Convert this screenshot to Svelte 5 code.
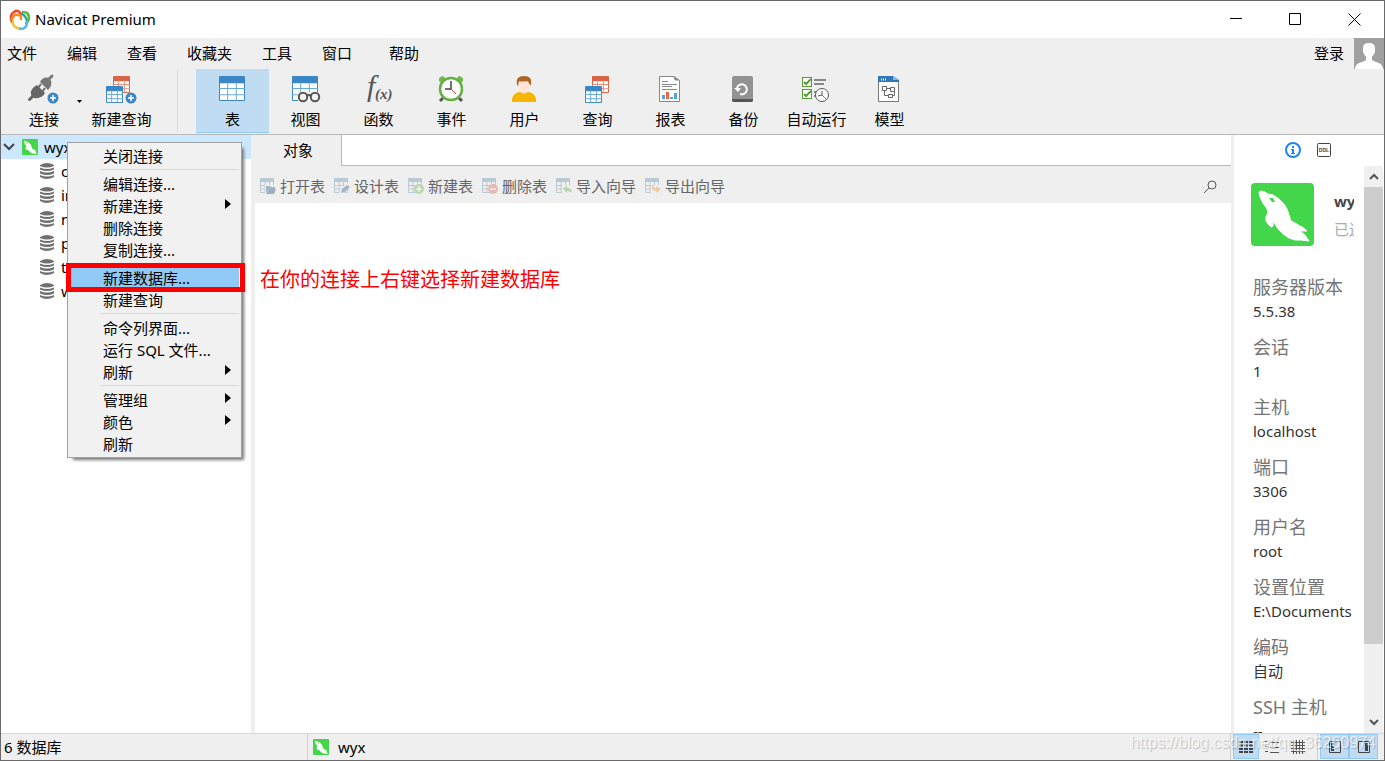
<script>
	const menus = ['文件', '编辑', '查看', '收藏夹', '工具', '窗口'];

	const tools = [
		{ icon: 'table', label: '表' },
		{ icon: 'view', label: '视图' },
		{ icon: 'function', label: '函数' },
		{ icon: 'event', label: '事件' },
		{ icon: 'user', label: '用户' },
		{ icon: 'query', label: '查询' },
		{ icon: 'report', label: '报表' },
		{ icon: 'backup', label: '备份' },
		{ icon: 'auto', label: '自动运行' },
		{ icon: 'model', label: '模型' }
	];

	const databases = ['c', 'in', 'm', 'p', 't', 'w'];

	const objectActions = [
		{ icon: 'open', label: '打开表' },
		{ icon: 'design', label: '设计表' },
		{ icon: 'add', label: '新建表' },
		{ icon: 'remove', label: '删除表' },
		{ icon: 'import', label: '导入向导' },
		{ icon: 'export', label: '导出向导' }
	];

	// groups are divided by a separator line
	const contextGroups = [
		[{ label: '关闭连接' }],
		[
			{ label: '编辑连接...' },
			{ label: '新建连接', submenu: true },
			{ label: '删除连接' },
			{ label: '复制连接...' }
		],
		[{ label: '新建数据库...', marked: true }, { label: '新建查询' }],
		[{ label: '命令列界面...' }, { label: '运行 SQL 文件...' }, { label: '刷新', submenu: true }],
		[{ label: '管理组', submenu: true }, { label: '颜色', submenu: true }, { label: '刷新' }]
	];

	const info = [
		{ label: '服务器版本', value: '5.5.38' },
		{ label: '会话', value: '1' },
		{ label: '主机', value: 'localhost' },
		{ label: '端口', value: '3306' },
		{ label: '用户名', value: 'root' },
		{ label: '设置位置', value: 'E:\\Documents' },
		{ label: '编码', value: '自动' },
		{ label: 'SSH 主机', value: '--' }
	];

	let activeTool = $state('table');
</script>

{#snippet dolphin(size)}
	<svg width={size} height={size} viewBox="0 0 63 63" aria-hidden="true">
		<rect width="63" height="63" rx="4" fill="#43d64b" />
		<path
			d="M8 9L10 8L14 9L17 11L22 12L28 16L33 21L36 26L38 32L40 38L44 40L49 43L53 45L56 48L49 48L54 52L58 58L50 57L44 57L38 55L32 51L27 46L24 41L22 38L22 43L20 44L17 41L15 38L15 34L17 29L16 26L12 20L9 14Z"
			fill="#fff"
			stroke="#fff"
			stroke-linejoin="round"
		/>
		<path d="M18 15l4 0l2 4l-3 0z" fill="#43d64b" />
	</svg>
{/snippet}

{#snippet grid(x, y, w, h, color, line)}
	<rect {x} {y} width={w} height={h} rx="1" fill={color} />
	<rect x={x + 1} y={y + h / 4 + 1} width={w - 2} height={(h * 3) / 4 - 2} fill="#fff" />
	<path
		d="M{x + w / 3} {y + h / 4}v{(h * 3) / 4}M{x + (w * 2) / 3} {y + h / 4}v{(h * 3) / 4}M{x} {y + h / 2}h{w}M{x} {y + (h * 3) / 4}h{w}"
		stroke={line}
		fill="none"
	/>
{/snippet}

{#snippet plus(x, y)}
	<circle cx={x} cy={y} r="5.5" fill="#3b86c4" />
	<path d="M{x - 3} {y}h6M{x} {y - 3}v6" stroke="#fff" stroke-width="1.5" />
{/snippet}

{#snippet toolIcon(name)}
	<svg width="34" height="32" viewBox="1 0 34 32" aria-hidden="true">
		{#if name === 'connect'}
			<g transform="translate(1 2)">
				<path d="M2.500 24.500L7 20" stroke="#666" stroke-width="3" stroke-linecap="round" />
				<path d="M5 22Q2 16 7 12L10 10L18 18Q15 24 7 23Z" fill="#666" />
				<path d="M11 13l3-4M15 17l3-4" stroke="#666" stroke-width="2" />
				<path d="M13 7Q16 1 22 3Q27 8 22 14L21 15Z" fill="#777" />
				<path d="M21 5l4-4" stroke="#777" stroke-width="3" stroke-linecap="round" />
			</g>
			{@render plus(27, 25)}
		{:else if name === 'newquery'}
			{@render grid(9, 3, 17, 17, '#d96445', '#e48f78')}
			{@render grid(2, 13, 17, 17, '#3b86c4', '#6aa9dc')}
			{@render plus(27, 25)}
		{:else if name === 'table'}
			{@render grid(4, 3, 26, 25, '#3b86c4', '#6aa9dc')}
		{:else if name === 'view'}
			{@render grid(4, 3, 26, 25, '#3b86c4', '#6aa9dc')}
			<path d="M10 19h23v12H10z" fill="#efefef" />
			<circle cx="15" cy="24" r="4.2" fill="#f3f3f3" stroke="#555" stroke-width="2" />
			<circle cx="27" cy="24" r="4.2" fill="#f3f3f3" stroke="#555" stroke-width="2" />
			<path d="M18.500 23q2.500-2 5 0" fill="none" stroke="#555" stroke-width="2" />
		{:else if name === 'function'}
			<text x="6" y="23" class="fn-f">f</text>
			<text x="14" y="26" class="fn-x">(x)</text>
		{:else if name === 'event'}
			<path d="M5 8Q4 4 9 3L12 6L7 10ZM29 8Q30 4 25 3L22 6L27 10Z" fill="#6ebb45" />
			<path d="M9 25l-3 3M25 25l3 3" stroke="#555" stroke-width="3" />
			<circle cx="17" cy="16" r="11" fill="#fff" stroke="#65af42" stroke-width="2.5" />
			<path d="M17 8v8h-6" fill="none" stroke="#444" stroke-width="1.5" />
			<path d="M17 16l5 5" stroke="#e54c40" />
		{:else if name === 'user'}
			<path d="M5 29v-3q1-6 8-7l4 1 4-1q7 1 8 7v3z" fill="#f7b500" />
			<path d="M14 15h6v4q-3 3-6 0z" fill="#fbe0cf" />
			<ellipse cx="17" cy="12" rx="6" ry="8" fill="#fde4d4" />
			<path d="M10 12Q8 3 17 3Q26 3 24 12L23 12Q22 9 20 8Q15 9 12 8L11 13Z" fill="#ad6526" />
		{:else if name === 'query'}
			{@render grid(12, 3, 17, 17, '#d96445', '#e48f78')}
			{@render grid(5, 13, 17, 17, '#3b86c4', '#6aa9dc')}
		{:else if name === 'report'}
			<path d="M6.500 3.500h15l5 4v21h-20z" fill="#fff" stroke="#888" />
			<path d="M20 3.500l2 4h5z" fill="#888" />
			<path d="M9 8.500h6M9 11.500h15M9 13.500h10M9 16.500h15" stroke="#888" />
			<path d="M9 22h3v4H9zM17 24h3v2h-3zM21 20h3v6h-3z" fill="#53a4dc" />
			<path d="M13 19h3v7h-3z" fill="#ee6542" />
		{:else if name === 'backup'}
			<rect x="6" y="3" width="21" height="26" rx="2" fill="#929292" />
			<path d="M6 26h21v1q0 2-2 2H8q-2 0-2-2z" fill="#555" />
			<path d="M11 15a5 5 0 1 1 3 6" fill="none" stroke="#fff" stroke-width="2" />
			<path d="M8 15h7l-3 4z" fill="#fff" />
		{:else if name === 'auto'}
			<rect x="3.500" y="4.500" width="9" height="9" fill="#fff" stroke="#579c38" />
			<rect x="3.500" y="16.500" width="9" height="9" fill="#fff" stroke="#579c38" />
			<path d="M5 9l2 2 5-5M5 21l2 2 5-5" fill="none" stroke="#579c38" stroke-width="2" />
			<path d="M15 7h12M15 11h10M15 19h3M15 23h3" stroke="#888" stroke-width="2" />
			<circle cx="23" cy="22" r="6.500" fill="#fff" stroke="#555" />
			<path d="M23 18v4l-4 1" fill="none" stroke="#555" />
			<path d="M23 22l4 4" stroke="#e54c40" />
		{:else if name === 'model'}
			<path d="M6.500 3.500h14l6 5v20h-20z" fill="#fff" stroke="#777" />
			<path d="M6 3h15l6 4v2H6z" fill="#2f77b5" />
			<path d="M21 3v4h6z" fill="#7bbcf0" />
			<path d="M9 6.500h6" stroke="#fff" stroke-dasharray="1 1" stroke-width="2" />
			<path d="M10.500 13.500h4v4h-4zM18.500 14.500h4v4h-4zM16.500 21.500h4v3h-4zM14.500 15.500h4M12.500 17.500v5h4M22.500 18.500v4h-2" fill="none" stroke="#666" />
		{/if}
	</svg>
{/snippet}

{#snippet actionIcon(name)}
	<svg width="16" height="16" viewBox="0 0 16 16" aria-hidden="true">
		<path d="M0 0h14v4H0z" fill="#b9cad7" />
		<path d="M.5 4v10.500h13V4M5 4v10M9.500 4v10M.5 7.500h13M.5 11h13" fill="none" stroke="#bccbd6" />
		{#if name === 'open'}
			<path d="M5 7h11v9H5z" fill="#efefef" />
			<path d="M6 15V8h4l1 1h4v2H9z" fill="#a4b4c2" />
			<path d="M9 11h7l-2 5H6z" fill="#9cadbd" />
		{:else if name === 'design'}
			<path d="M5 16l2-6 6-5 4 3-8 8z" fill="#efefef" />
			<path d="M7 15l1-4 5-4 3 2-5 5z" fill="#9eb5c7" />
		{:else if name === 'add'}
			<circle cx="11" cy="11" r="5" fill="#b9d6ad" />
			<path d="M8 11h6M11 8v6" stroke="#fff" />
		{:else if name === 'remove'}
			<circle cx="11" cy="11" r="5" fill="#e6b9b5" />
			<path d="M8 11h6" stroke="#fff" />
		{:else if name === 'import'}
			<path d="M6 7h10v9H6z" fill="#efefef" />
			<path d="M7 11l4-4v3q5 0 5 5-2-2-5-2v2z" fill="#b8d3ae" />
		{:else}
			<path d="M6 7h10v9H6z" fill="#efefef" />
			<path d="M7 7v3q0 3 4 3v2l5-4-5-3v2H9V7z" fill="#edcda8" />
		{/if}
	</svg>
{/snippet}

<div class="window">
	<header class="title-bar">
		<svg class="app-logo" width="22" height="22" viewBox="0 0 22 22" aria-hidden="true">
			<g fill="none" stroke-width="2.5" stroke-linecap="round">
				<path d="M3 13Q0 6 5 3Q9 0 12 5" stroke="#ee4b2b" />
				<path d="M3 10Q5 5 9 6Q13 6 12 10" stroke="#f28b25" />
				<path d="M14 3Q20 3 20 9Q20 12 17 14" stroke="#58b947" />
				<path d="M13 5Q17 7 18 12" stroke="#2fa69b" />
				<path d="M8 19Q18 22 18 13" stroke="#5ab4e5" />
				<path d="M4 12Q3 18 9 19" stroke="#f2c33b" />
			</g>
		</svg>
		<span class="app-title">Navicat Premium</span>
		<button class="window-button" aria-label="最小化">
			<svg width="13" height="13"><path d="M0 5.500h12" stroke="#000" /></svg>
		</button>
		<button class="window-button" aria-label="最大化">
			<svg width="13" height="13"><path d="M.5.5h11v11H.5z" fill="none" stroke="#000" /></svg>
		</button>
		<button class="window-button" aria-label="关闭">
			<svg width="13" height="13"><path d="M.5.5l12 12M12.500.5l-12 12" stroke="#000" /></svg>
		</button>
	</header>

	<nav class="menu-bar">
		<div class="menu-group">
			{#each menus as menu}
				<button>{menu}</button>
			{/each}
		</div>
		<button>帮助</button>
		<div class="account">
			<button>登录</button>
			<svg width="30" height="31" viewBox="0 0 30 31" aria-hidden="true">
				<path d="M0 0h30v31H0z" fill="#a0a0a0" />
				<path d="M9 10q0-5 6-5t6 5v4l-1 2-2 3v3q3 2 7 3 4 2 4 6H1q0-4 4-6 4-1 7-3v-3l-2-3-1-2z" fill="#fff" />
			</svg>
		</div>
	</nav>

	<div class="toolbar">
		<button class="tool connect">
			{@render toolIcon('connect')}
			<span>连接</span>
		</button>
		<button class="tool-caret" aria-label="更多连接">
			<svg width="5" height="3"><path d="M0 0h5L2.500 3z" fill="#000" /></svg>
		</button>
		<button class="tool">
			{@render toolIcon('newquery')}
			<span>新建查询</span>
		</button>
		<div class="tool-divider"></div>
		{#each tools as tool}
			<button
				class="tool"
				class:active={activeTool === tool.icon}
				onclick={() => (activeTool = tool.icon)}
			>
				{@render toolIcon(tool.icon)}
				<span>{tool.label}</span>
			</button>
		{/each}
	</div>

	<div class="workspace">
		<aside class="sidebar">
			<div class="tree-row connection">
				<svg width="12" height="8"><path d="M1 1l5 5 5-5" fill="none" stroke="#444" stroke-width="2" /></svg>
				{@render dolphin(16)}
				<span>wyx</span>
			</div>
			{#each databases as database}
				<div class="tree-row database">
					<svg width="16" height="16" viewBox="0 0 16 16" aria-hidden="true">
						<path d="M1 2q7-4 14 0v1q-7 3-14 0zM1 4.500q7 3 14 0v2q-7 3-14 0zM1 8q7 3 14 0v2.500q-7 3-14 0zM1 12q7 3 14 0v2q-7 4-14 0z" fill="#707070" />
					</svg>
					<span>{database}</span>
				</div>
			{/each}

			<div class="context-menu" role="menu">
				{#each contextGroups as group}
					<div class="context-group">
						{#each group as item}
							<button class="context-item" class:marked={item.marked} role="menuitem">
								{item.label}
								{#if item.submenu}
									<svg width="6" height="14"><path d="M0 0l6 5-6 5z" fill="#000" /></svg>
								{/if}
							</button>
						{/each}
					</div>
				{/each}
			</div>
		</aside>

		<main class="content">
			<div class="tabs">
				<button class="tab">对象</button>
			</div>
			<div class="object-bar">
				{#each objectActions as action}
					<button class="object-action">
						{@render actionIcon(action.icon)}
						<span>{action.label}</span>
					</button>
				{/each}
				<button class="search" aria-label="搜索">
					<svg width="13" height="13" fill="none" stroke="#555"><circle cx="8" cy="5" r="4" /><path d="M5 8l-5 5" /></svg>
				</button>
			</div>
			<div class="objects">
				<p class="note">在你的连接上右键选择新建数据库</p>
			</div>
		</main>

		<aside class="info-panel">
			<div class="info-tabs">
				<button aria-label="信息">
					<svg width="16" height="16" viewBox="0 0 16 16">
						<circle cx="8" cy="8" r="7" fill="none" stroke="#1a85ff" stroke-width="2" />
						<path d="M7 4h2v2H7zM6 7h3v4h1v1H6v-1h1V8H6z" fill="#1a85ff" />
					</svg>
				</button>
				<button class="ddl" aria-label="DDL">
					<svg width="14" height="14" viewBox="0 0 14 14">
						<rect x=".5" y=".5" width="13" height="13" rx="1" fill="none" stroke="#444" />
						<text x="7" y="9" text-anchor="middle">DDL</text>
					</svg>
				</button>
			</div>
			<div class="info-body">
				<div class="info-content">
					<div class="info-head">
						{@render dolphin(63)}
						<div>
							<strong>wyx</strong>
							<span>已连接</span>
						</div>
					</div>
					<dl>
						{#each info as row}
							<dt>{row.label}</dt>
							<dd>{row.value}</dd>
						{/each}
					</dl>
				</div>
				<div class="scrollbar">
					<button aria-label="向上滚动">
						<svg width="10" height="7"><path d="M1 6l4-4 4 4" fill="none" stroke="#555" stroke-width="2" /></svg>
					</button>
					<div class="track"><div class="thumb"></div></div>
					<button aria-label="向下滚动">
						<svg width="10" height="7"><path d="M1 1l4 4 4-4" fill="none" stroke="#555" stroke-width="2" /></svg>
					</button>
				</div>
			</div>
		</aside>
	</div>

	<footer class="status-bar">
		<div class="status-count">6 数据库</div>
		<div class="status-connection">
			{@render dolphin(16)}
			<span>wyx</span>
		</div>
		<div class="view-modes">
			<button class="on" aria-label="列表">
				<svg width="14" height="12"><path d="M0 1h14M0 4.500h14M0 8h14M0 11h14" stroke="#444" stroke-width="2" stroke-dasharray="4 1" /></svg>
			</button>
			<button aria-label="详细信息">
				<svg width="14" height="12"><path d="M0 .5h3M0 5.500h3M0 10.500h3M5 1.500h9M5 6.500h9M5 11.500h9" stroke="#555" /></svg>
			</button>
			<button aria-label="ER 图表">
				<svg width="14" height="14"><path d="M0 2.500h14M0 5.500h14M0 8.500h14M0 11.500h14M2.500 0v14M5.500 0v14M8.500 0v14M11.500 0v14" stroke="#555" /></svg>
			</button>
		</div>
		<div class="pane-modes">
			<button class="on" aria-label="导航窗格">
				<svg width="12" height="12"><path d="M.5.5h11v11H.5z" fill="none" stroke="#444" /><path d="M2 2h3v8H2z" fill="#444" /><path d="M3 4.500h2M3 7.500h2" stroke="#c0dcf3" /></svg>
			</button>
			<button class="on" aria-label="信息窗格">
				<svg width="12" height="12"><path d="M.5.5h11v11H.5z" fill="none" stroke="#444" /><path d="M7 2h3v8H7z" fill="#444" /></svg>
			</button>
		</div>
	</footer>
	<div class="watermark">https://blog.csdn.net/qq_36260974</div>
</div>

<style>
	:global(body) {
		margin: 0;
	}

	.window {
		position: relative;
		box-sizing: border-box;
		display: flex;
		flex-direction: column;
		height: 100vh;
		border: 1px solid #6b6969;
		background: #efefef;
		color: #000;
		font: 15px/22px 'Noto Sans', 'Noto Sans CJK SC', sans-serif;
		overflow: hidden;
	}

	svg {
		display: block;
		flex: none;
	}

	button {
		padding: 0;
		border: 0;
		background: none;
		color: inherit;
		font: inherit;
		white-space: nowrap;
	}

	.title-bar {
		display: flex;
		align-items: center;
		height: 37px;
		padding-left: 8px;
		background: #fff;
	}

	.app-title {
		flex: 1;
		margin-left: 4px;
		padding-bottom: 2px;
	}

	.window-button {
		display: flex;
		align-items: center;
		justify-content: center;
		width: 59px;
		height: 37px;
	}

	.menu-bar {
		display: flex;
		gap: 37px;
		height: 31px;
		padding-left: 6px;
	}

	.menu-bar button {
		height: 30px;
	}

	.menu-group {
		display: flex;
		gap: 30px;
	}

	.account {
		display: flex;
		gap: 10px;
		margin-left: auto;
	}

	.toolbar {
		display: flex;
		height: 65px;
		border-bottom: 1px solid #b8b8b8;
	}

	.tool {
		box-sizing: border-box;
		display: flex;
		flex-direction: column;
		align-items: center;
		width: 73px;
		height: 64px;
		padding-top: 4px;
		border-bottom: 1px solid transparent;
	}

	.tool span {
		margin-top: 3px;
	}

	.tool.connect {
		width: 60px;
		margin-left: 13px;
	}

	.tool.active {
		border-color: #91c9f7;
		background: #c0dcf3;
	}

	.tool-caret {
		display: flex;
		align-items: center;
		justify-content: center;
		width: 11px;
	}

	.tool-divider {
		width: 1px;
		margin: 1px 18px 2px 19px;
		background: #d9d9d9;
	}

	.fn-f {
		font: italic 30px 'Liberation Serif', serif;
		fill: #555;
	}

	.fn-x {
		font: italic bold 15px 'Liberation Serif', serif;
		fill: #555;
	}

	.workspace {
		display: flex;
		flex: 1;
		min-height: 0;
	}

	.sidebar {
		position: relative;
		flex: none;
		width: 250px;
		background: #fff;
	}

	.tree-row {
		display: flex;
		align-items: center;
		height: 24px;
	}

	.connection {
		gap: 6px;
		padding-left: 2px;
		background: #cce8ff;
	}

	.connection svg:first-child {
		margin-right: 1px;
	}

	.database {
		gap: 6px;
		padding-left: 38px;
	}

	.context-menu {
		position: absolute;
		top: 7px;
		left: 66px;
		z-index: 2;
		box-sizing: border-box;
		width: 175px;
		padding: 2px;
		border: 1px solid #a0a0a0;
		background: #f1f1f1;
		box-shadow: 4px 4px 3px -2px #777;
	}

	.context-group + .context-group::before {
		content: '';
		display: block;
		height: 1px;
		margin: 2px 0 3px 31px;
		background: #d7d7d7;
	}

	.context-item {
		position: relative;
		display: flex;
		align-items: center;
		justify-content: space-between;
		width: 100%;
		height: 22px;
		padding: 0 8px 0 33px;
	}

	.context-item.marked {
		background: #91c9f7;
	}

	.context-item.marked::after {
		content: '';
		position: absolute;
		inset: -4px -6px -3px -4px;
		border: 5px solid #f00;
	}

	.content {
		display: flex;
		flex: 1;
		flex-direction: column;
		min-width: 0;
	}

	.tabs {
		display: flex;
		height: 31px;
		background: #fff;
	}

	.tabs::after {
		content: '';
		flex: 1;
		border-bottom: 1px solid #b8b8b8;
	}

	.tab {
		width: 91px;
		padding: 0 0 2px 4px;
		border-right: 1px solid #b8b8b8;
		background: #efefef;
	}

	.object-bar {
		display: flex;
		align-items: center;
		gap: 9px;
		height: 37px;
		padding: 3px 14px 0 9px;
		box-sizing: border-box;
	}

	.object-action {
		display: flex;
		align-items: center;
		gap: 4px;
		color: #666;
	}

	.search {
		margin-left: auto;
	}

	.objects {
		flex: 1;
		margin-left: 4px;
		padding: 63px 5px 0;
		background: #fff;
	}

	.note {
		margin: 0;
		color: #f00;
		font-size: 20px;
		line-height: 28px;
	}

	.info-panel {
		display: flex;
		flex: none;
		flex-direction: column;
		width: 150px;
		margin-left: 3px;
		background: #fff;
	}

	.info-tabs {
		display: flex;
		align-items: center;
		gap: 16px;
		height: 30px;
		padding: 0 0 1px 51px;
	}

	.ddl text {
		font: bold 5px 'Liberation Sans', sans-serif;
		fill: #444;
	}

	.info-body {
		display: flex;
		flex: 1;
		min-height: 0;
	}

	.info-content {
		flex: 1;
		min-width: 0;
		margin-right: 10px;
		padding: 17px 0 0 17px;
		overflow: hidden;
	}

	.info-head {
		display: flex;
		gap: 20px;
	}

	.info-head strong,
	.info-head span {
		display: block;
		color: #444;
		line-height: 28px;
		white-space: nowrap;
	}

	.info-head div {
		padding-top: 4px;
	}

	.info-head span {
		color: #aaa;
	}

	dl {
		margin: 27px 0 0 2px;
	}

	dt {
		color: #757575;
		font-size: 18px;
		line-height: 28px;
	}

	dd {
		margin: 0 0 12px;
		color: #333;
		line-height: 20px;
	}

	.scrollbar {
		display: flex;
		flex-direction: column;
		width: 19px;
		margin-right: 1px;
		background: #f0f0f0;
	}

	.scrollbar button {
		display: flex;
		align-items: center;
		justify-content: center;
		height: 21px;
	}

	.track {
		flex: 1;
	}

	.thumb {
		height: 87%;
		background: #cdcdcd;
	}

	.status-bar {
		display: flex;
		box-sizing: border-box;
		height: 27px;
		border-top: 1px solid #d7d7d7;
		line-height: 26px;
	}

	.status-count {
		width: 303px;
		padding-left: 3px;
		border-right: 1px solid #d0d0d0;
	}

	.status-connection {
		display: flex;
		flex: 1;
		align-items: center;
		gap: 9px;
		padding-left: 5px;
	}

	.view-modes,
	.pane-modes {
		display: flex;
		padding: 0 2px;
		border-left: 1px solid #d0d0d0;
	}

	.pane-modes {
		padding-right: 6px;
	}

	.view-modes button,
	.pane-modes button {
		box-sizing: border-box;
		display: flex;
		align-items: center;
		justify-content: center;
		width: 26px;
		height: 25px;
		border: 1px solid transparent;
	}

	.pane-modes button {
		width: 29px;
	}

	.view-modes .on,
	.pane-modes .on {
		border-color: #91c9f7;
		background: #c0dcf3;
	}

	.view-modes button:last-child {
		margin-right: 4px;
	}

	.watermark {
		position: absolute;
		right: 8px;
		bottom: 6px;
		z-index: 3;
		color: rgba(255, 255, 255, 0.7);
		font: 16px/22px 'Liberation Sans', sans-serif;
		text-shadow: 1px 1px 1px rgba(0, 0, 0, 0.2);
		pointer-events: none;
	}
</style>
